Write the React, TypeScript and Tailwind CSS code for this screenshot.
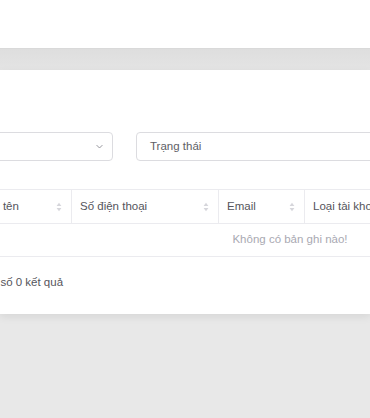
import React from 'react';

const FONT = { fontFamily: '"Liberation Sans", Arial, sans-serif' };

const COLUMNS = [
  { label: 'Họ tên', width: 'w-[97px]' },
  { label: 'Số điện thoại', width: 'w-[147px]' },
  { label: 'Email', width: 'w-[86px]' },
  { label: 'Loại tài khoản', width: 'flex-1' },
];

function SortIcon() {
  return (
    <svg width="6" height="10" viewBox="0 0 6 10" className="shrink-0 text-[#d6d6db]" fill="currentColor">
      <path d="M3 0.8L5.4 4H0.6z" />
      <path d="M3 9.2L0.6 6h4.8z" />
    </svg>
  );
}

function ChevronDown() {
  return (
    <svg width="9" height="9" viewBox="0 0 24 24" fill="none" stroke="#8a8a92" strokeWidth="2.4" strokeLinecap="round" strokeLinejoin="round">
      <path d="M5 9l7 7 7-7" />
    </svg>
  );
}

export default function App() {
  return (
    <div className="w-[370px] h-[418px] overflow-hidden bg-[#e8e8e8] flex flex-col" style={FONT}>
      {/* top bar */}
      <div className="h-[48px] bg-white shrink-0" />
      <div className="h-[22px] shrink-0 bg-gradient-to-b from-[#dedede] to-[#e4e4e4] border-t border-[#d9d9d9]" />

      {/* card */}
      <div className="h-[244px] shrink-0 bg-white shadow-[0_3px_8px_rgba(0,0,0,0.08)] overflow-hidden">
        <div className="-ml-[26px] w-[632px] pt-[62px]">
          {/* filters */}
          <div className="flex gap-[23px]">
            <div className="w-[139px] h-[29px] rounded-[4px] border border-[#dcdce0] flex items-center justify-end pr-[8px]">
              <ChevronDown />
            </div>
            <div className="w-[300px] h-[29px] rounded-[4px] border border-[#dcdce0] flex items-center pl-[13px] text-[11.5px] text-[#606066]">
              Trạng thái
            </div>
          </div>

          {/* table */}
          <div className="mt-[28px] border-t border-[#ebebef]">
            <div className="flex h-[34px] border-b border-[#ebebef]">
              {COLUMNS.map((col, i) => (
                <div
                  key={col.label}
                  className={`${col.width} flex items-center justify-between pr-[9px] text-[11.5px] text-[#55555c] ${
                    i > 0 ? 'border-l border-[#ebebef] pl-[8px]' : 'pl-[11px]'
                  }`}
                >
                  <span className="whitespace-nowrap">{col.label}</span>
                  {i < 3 && <SortIcon />}
                </div>
              ))}
            </div>
            <div className="h-[33px] border-b border-[#ebebef] flex items-center justify-center text-[11.5px] text-[#a9a9b2]">
              Không có bản ghi nào!
            </div>
          </div>

          {/* footer */}
          <div className="mt-[17px] -ml-[3px] text-[11.5px] text-[#55555c]">Tổng số 0 kết quả</div>
        </div>
      </div>
    </div>
  );
}
